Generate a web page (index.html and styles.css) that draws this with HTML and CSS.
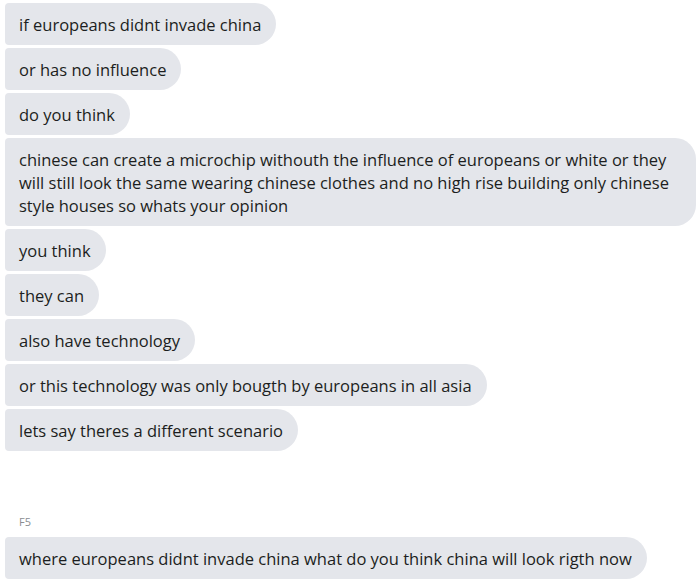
FILE: index.html
```html
<!DOCTYPE html>
<html>
<head>
<meta charset="utf-8">
<link rel="stylesheet" href="styles.css">
</head>
<body>
<div class="thread">
  <div class="group">
    <div class="bubble">if europeans didnt invade china</div>
    <div class="bubble">or has no influence</div>
    <div class="bubble">do you think</div>
    <div class="bubble">chinese can create a microchip withouth the influence of europeans or white or they will still look the same wearing chinese clothes and no high rise building only chinese style houses so whats your opinion</div>
    <div class="bubble">you think</div>
    <div class="bubble">they can</div>
    <div class="bubble">also have technology</div>
    <div class="bubble">or this technology was only bougth by europeans in all asia</div>
    <div class="bubble">lets say theres a different scenario</div>
  </div>
  <div class="group later">
    <div class="sender">F5</div>
    <div class="bubble">where europeans didnt invade china what do you think china will look rigth now</div>
  </div>
</div>
</body>
</html>
```
FILE: styles.css
```css
html, body {
  margin: 0;
  padding: 0;
  background: #ffffff;
}
body {
  font-family: "Open Sans", "Liberation Sans", sans-serif;
  color: #1c1e21;
}
.thread {
  padding: 3px 4px 0 5px;
  display: flex;
  flex-direction: column;
}
.group {
  display: flex;
  flex-direction: column;
  align-items: flex-start;
  gap: 3px;
}
.later {
  margin-top: 64px;
}
.bubble {
  background: #e4e6eb;
  border-radius: 4px 21px 21px 4px;
  padding: 10px 15px 9px 14px;
  font-size: 16.5px;
  line-height: 23px;
  max-width: 662px;
}
.sender {
  font-size: 11px;
  line-height: 14px;
  color: #8a8d91;
  padding-left: 14px;
  margin-bottom: 5px;
}
```
